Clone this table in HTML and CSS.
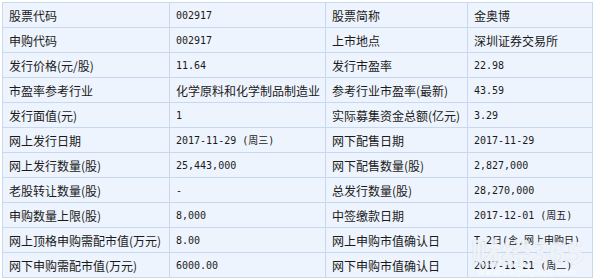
FILE: index.html
```html
<!DOCTYPE html>
<html>
<head>
  <meta charset="utf-8">
  <link rel="stylesheet" href="styles.css">
</head>
<body>
  <div class="wrap">
    <table class="ipo-table">
      <colgroup>
        <col class="c1"><col class="c2"><col class="c3"><col class="c4">
      </colgroup>
      <tr><td>股票代码</td><td class="num">002917</td><td>股票简称</td><td>金奥博</td></tr>
      <tr><td>申购代码</td><td class="num">002917</td><td>上市地点</td><td>深圳证券交易所</td></tr>
      <tr><td>发行价格(元/股)</td><td class="num">11.64</td><td>发行市盈率</td><td class="num">22.98</td></tr>
      <tr><td>市盈率参考行业</td><td>化学原料和化学制品制造业</td><td>参考行业市盈率(最新)</td><td class="num">43.59</td></tr>
      <tr><td>发行面值(元)</td><td class="num">1</td><td>实际募集资金总额(亿元)</td><td class="num">3.29</td></tr>
      <tr><td>网上发行日期</td><td class="num">2017-11-29 (周三)</td><td>网下配售日期</td><td class="num">2017-11-29</td></tr>
      <tr><td>网上发行数量(股)</td><td class="num">25,443,000</td><td>网下配售数量(股)</td><td class="num">2,827,000</td></tr>
      <tr><td>老股转让数量(股)</td><td class="num">-</td><td>总发行数量(股)</td><td class="num">28,270,000</td></tr>
      <tr><td>申购数量上限(股)</td><td class="num">8,000</td><td>中签缴款日期</td><td class="num">2017-12-01 (周五)</td></tr>
      <tr><td>网上顶格申购需配市值(万元)</td><td class="num">8.00</td><td>网上申购市值确认日</td><td class="num">T-2日(含,网上申购日)</td></tr>
      <tr><td>网下申购需配市值(万元)</td><td class="num">6000.00</td><td>网下申购市值确认日</td><td class="num">2017-11-21 (周二)</td></tr>
    </table>
    <div class="watermark">
      <span class="wm-logo">财经365</span>
      <span class="wm-url">www.caijing365.com</span>
    </div>
  </div>
</body>
</html>
```

FILE: styles.css
```css
* {
  margin: 0;
  padding: 0;
  box-sizing: border-box;
}

body {
  background: #fff;
  font-family: "Noto Sans CJK SC", "Liberation Sans", sans-serif;
  color: #1a1a1a;
}

.wrap {
  position: relative;
  width: 590px;
  margin: 2px 0 0 2px;
}

.ipo-table {
  width: 590px;
  border-collapse: collapse;
  table-layout: fixed;
  background: #eef4fd;
}

.c1 { width: 167px; }
.c2 { width: 156px; }
.c3 { width: 142px; }
.c4 { width: 125px; }

.ipo-table td {
  height: 25px;
  padding: 0 0 0 6px;
  border: 1px solid #c8d8ee;
  font-size: 12px;
  line-height: 23px;
  white-space: nowrap;
  overflow: hidden;
}

.ipo-table td.num {
  font-family: "DejaVu Sans Mono", "Noto Sans CJK SC", monospace;
  font-size: 10px;
}

.watermark {
  position: absolute;
  right: 8px;
  bottom: 1px;
  display: flex;
  flex-direction: column;
  align-items: center;
  color: rgba(255, 255, 255, 0.75);
  pointer-events: none;
}

.wm-logo {
  font-size: 30px;
  font-weight: bold;
  line-height: 32px;
  text-shadow: 0 0 1px rgba(150, 170, 200, 0.5);
}

.wm-url {
  font-family: "Liberation Sans", sans-serif;
  font-size: 9px;
  line-height: 10px;
  letter-spacing: 1px;
}
```
